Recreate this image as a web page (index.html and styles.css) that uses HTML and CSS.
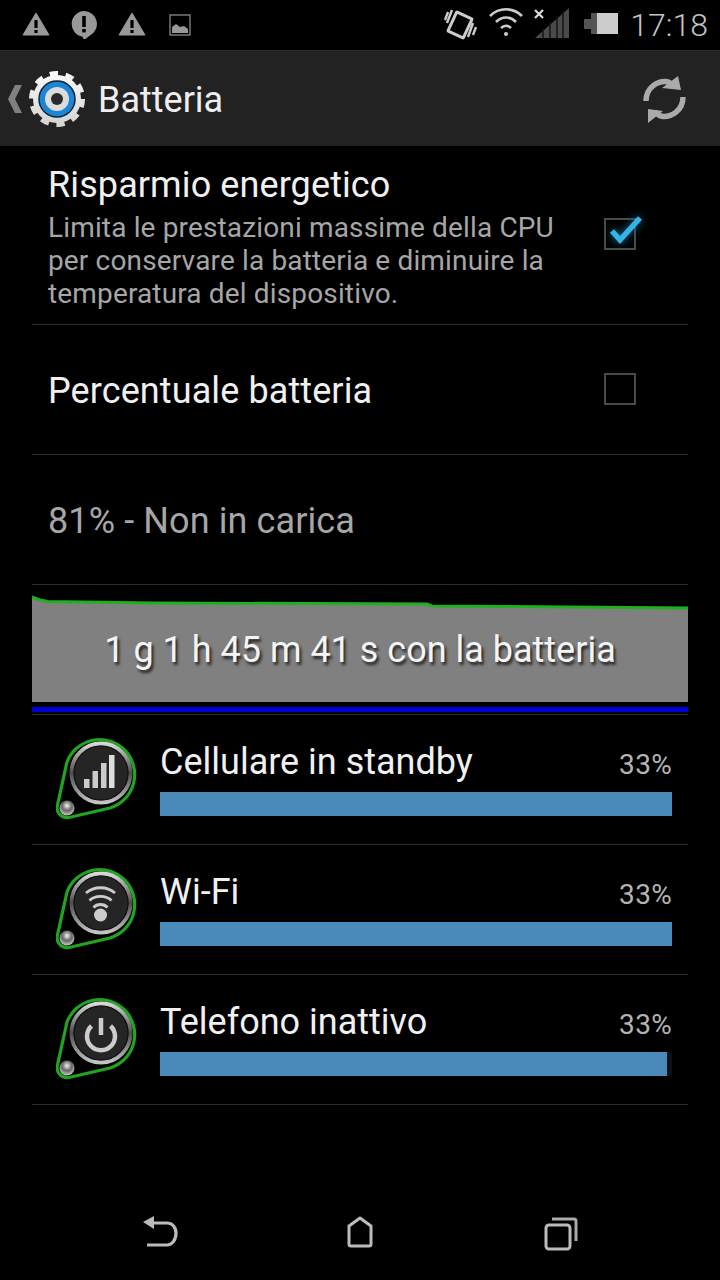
FILE: index.html
```html
<!DOCTYPE html>
<html lang="en">
<head>
    <meta charset="UTF-8">
    <meta name="viewport" content="width=device-width, initial-scale=1.0">
    <title>Batteria</title>
    <link rel="stylesheet" href="styles.css">
</head>
<body>
    <svg class="defs" width="0" height="0">
        <defs>
            <linearGradient id="metal" x1="0" y1="0" x2="0" y2="1">
                <stop offset="0" stop-color="#d8d8d8"/>
                <stop offset="0.5" stop-color="#4c4c4c"/>
                <stop offset="1" stop-color="#c4c4c4"/>
            </linearGradient>
            <radialGradient id="ball" cx="0.5" cy="0.35" r="0.6">
                <stop offset="0" stop-color="#f4f4f4"/>
                <stop offset="0.55" stop-color="#666"/>
                <stop offset="1" stop-color="#bbb"/>
            </radialGradient>
            <linearGradient id="gearfill" x1="0" y1="0" x2="0" y2="1">
                <stop offset="0" stop-color="#fafafa"/>
                <stop offset="1" stop-color="#d4d4d4"/>
            </linearGradient>
            <symbol id="pin" viewBox="0 0 84 88">
                <path d="M11 27 L1.5 70 A 10 10 0 0 0 13 82.5 L54 73 A 35 35 0 1 0 11 27 Z" fill="#000" stroke="#1fa51f" stroke-width="3.2"/>
                <circle cx="45" cy="38" r="29.5" fill="#252525" stroke="url(#metal)" stroke-width="4"/>
                <circle cx="45" cy="38" r="27" fill="none" stroke="#111" stroke-width="1.2"/>
                <circle cx="11" cy="73" r="7.5" fill="url(#ball)"/>
            </symbol>
        </defs>
    </svg>

    <div class="statusbar">
        <svg class="st" width="28" height="28" viewBox="0 0 28 28"><path d="M14 2 L27 24 H1 Z" fill="#999" stroke="#999" stroke-linejoin="round"/><rect x="12.4" y="9" width="3.2" height="8" fill="#000"/><rect x="12.4" y="19" width="3.2" height="3" fill="#000"/></svg>
        <svg class="st" width="28" height="28" viewBox="0 0 28 28"><path d="M14 0 A13 13 0 0 1 20 24.5 L14 29 L12.5 25.8 A13 13 0 0 1 14 0 Z" fill="#999"/><rect x="12.2" y="5" width="3.6" height="11" fill="#000"/><rect x="12.2" y="18" width="3.6" height="3.4" fill="#000"/></svg>
        <svg class="st" width="28" height="28" viewBox="0 0 28 28"><path d="M14 2 L27 24 H1 Z" fill="#999" stroke="#999" stroke-linejoin="round"/><rect x="12.4" y="9" width="3.2" height="8" fill="#000"/><rect x="12.4" y="19" width="3.2" height="3" fill="#000"/></svg>
        <svg class="st" width="28" height="28" viewBox="0 0 28 28"><rect x="4" y="4" width="20" height="20" fill="none" stroke="#777" stroke-width="1.5"/><path d="M6 22 V16 L10 13 L14 16 L18 15 L22 18 V22 Z" fill="#999"/></svg>
        <div class="st-right">
            <svg width="34" height="40" viewBox="0 0 34 40">
                <rect x="8.5" y="9.5" width="17" height="21" rx="1" fill="none" stroke="#ccc" stroke-width="3" transform="rotate(25 17 20)"/>
                <path d="M5 7 L2 15 M9 5 L4 18 M30 18 L25 32 M33 22 L30 30" stroke="#ccc" stroke-width="2.4" fill="none"/>
            </svg>
            <svg width="34" height="40" viewBox="0 0 34 40">
                <path d="M1 11 C10 2 24 2 33 11 M7 17 C13 11 21 11 27 17 M12 23 C15 20 19 20 22 23" fill="none" stroke="#ccc" stroke-width="2.6"/>
                <circle cx="17" cy="29" r="2" fill="#ccc"/>
            </svg>
            <svg class="signal" width="34" height="40" viewBox="0 0 34 40">
                <path d="M0 33 L34 3 V33 Z" fill="#4a4a4a"/>
                <path d="M8 23 V33 M15 17 V33 M22 11 V33 M28 6 V33" stroke="#111" stroke-width="1.4"/>
                <path d="M0 5 L8 13 M8 5 L0 13" stroke="#ddd" stroke-width="2.2"/>
            </svg>
            <svg width="37" height="40" viewBox="0 0 37 40">
                <rect x="3" y="14" width="8" height="10" fill="#555"/>
                <rect x="10" y="8" width="7" height="21" fill="#555"/>
                <rect x="16" y="8" width="21" height="21" fill="#ccc"/>
            </svg>
            <span class="clock">17:18</span>
        </div>
    </div>

    <div class="actionbar">
        <svg class="up" width="16" height="28" viewBox="0 0 16 28"><path d="M14 0 H7 L0 14 L7 28 H14 L7 14 Z" fill="#808080"/></svg>
        <svg class="gear" width="60" height="60" viewBox="0 0 60 60">
            <circle cx="30" cy="30" r="25" fill="none" stroke="url(#gearfill)" stroke-width="6" stroke-dasharray="8.2 7.5"/>
            <circle cx="30" cy="30" r="24" fill="url(#gearfill)"/>
            <circle cx="30" cy="30" r="18" fill="#1c86d6" stroke="#123" stroke-width="1.5"/>
            <circle cx="30" cy="30" r="12" fill="#dcdcdc"/>
            <circle cx="30" cy="30" r="6" fill="#2a2a2a"/>
        </svg>
        <span class="screen-title">Batteria</span>
        <svg class="sync" width="48" height="52" viewBox="0 0 48 52">
            <path d="M6 28 C6 14 18 8 26 8.5 C30 9 32 11 34 13" fill="none" stroke="#aaa" stroke-width="5.5"/>
            <path d="M38 3 L41 17 L22 15 Z" fill="#aaa"/>
            <path d="M43 24 C43 38 31 44 23 43.5 C19 43 17 41 15 39" fill="none" stroke="#aaa" stroke-width="5.5"/>
            <path d="M8 50 L8 36 L23 38 Z" fill="#aaa"/>
        </svg>
    </div>

    <div class="list">
        <div class="pref pref-first">
            <div class="pref-text">
                <div class="pref-title">Risparmio energetico</div>
                <div class="pref-desc">Limita le prestazioni massime della CPU per conservare la batteria e diminuire la temperatura del dispositivo.</div>
            </div>
            <div class="check">
                <svg class="tick" width="38" height="34" viewBox="0 0 38 34"><path d="M6 19 L14 28 L34 6" fill="none" stroke="#33b5e5" stroke-width="5.5"/></svg>
            </div>
        </div>
        <div class="pref">
            <div class="pref-text">
                <div class="pref-title">Percentuale batteria</div>
            </div>
            <div class="check"></div>
        </div>
        <div class="pref pref-status">81% - Non in carica</div>

        <div class="chart">
            <div class="chart-plot">
                <svg width="656" height="117" viewBox="0 0 656 117">
                    <path d="M0 12 L8 15 L16 16.5 L120 18 L395 19 L400 21 L656 23 V117 H0 Z" fill="#808080"/>
                    <path d="M0 12 L8 15 L16 16.5 L120 18 L395 19 L400 21 L656 23" fill="none" stroke="#1fb01f" stroke-width="3"/>
                </svg>
                <div class="chart-label">1 g 1 h 45 m 41 s con la batteria</div>
            </div>
            <div class="chart-blue"></div>
        </div>

        <div class="usage">
            <svg class="pin" width="84" height="88"><use href="#pin"/>
                <rect x="28" y="44" width="5.5" height="9" fill="#ccc"/><rect x="36.5" y="36" width="5.5" height="17" fill="#ccc"/><rect x="45" y="28" width="5.5" height="25" fill="#ccc"/><rect x="53" y="20" width="5.5" height="33" fill="#ddd"/>
            </svg>
            <div class="usage-body">
                <div class="usage-head"><span class="usage-name">Cellulare in standby</span><span class="usage-pct">33%</span></div>
                <div class="bar"><div class="bar-fill" style="width: 100%"></div></div>
            </div>
        </div>
        <div class="usage">
            <svg class="pin" width="84" height="88"><use href="#pin"/>
                <path d="M30 28 C38 21 51 21 59 28 M33.5 35.5 C39 30 50 30 55.5 35.5 M37.5 42.5 C41 38.5 48 38.5 51.5 42.5" fill="none" stroke="#ccc" stroke-width="2.8"/>
                <circle cx="44.5" cy="50" r="6.5" fill="#ccc"/>
            </svg>
            <div class="usage-body">
                <div class="usage-head"><span class="usage-name">Wi-Fi</span><span class="usage-pct">33%</span></div>
                <div class="bar"><div class="bar-fill" style="width: 100%"></div></div>
            </div>
        </div>
        <div class="usage">
            <svg class="pin" width="84" height="88"><use href="#pin"/>
                <path d="M35.5 31 A14 14 0 1 0 54.5 31" fill="none" stroke="#ccc" stroke-width="4.5"/>
                <path d="M45 23 V40" stroke="#ccc" stroke-width="4.5"/>
            </svg>
            <div class="usage-body">
                <div class="usage-head"><span class="usage-name">Telefono inattivo</span><span class="usage-pct">33%</span></div>
                <div class="bar"><div class="bar-fill" style="width: 99%"></div></div>
            </div>
        </div>
    </div>

    <div class="navbar">
        <svg width="40" height="36" viewBox="0 0 40 36"><path d="M10 8 H27 C32 8 36 12 36 18 C36 25 32 30 27 30 H7" fill="none" stroke="#bbb" stroke-width="3.2"/><path d="M3 7 L14 1 V14 Z" fill="#bbb"/></svg>
        <svg width="40" height="36" viewBox="0 0 40 36"><path d="M20 3 L31 11 V29 Q31 31 29 31 H11 Q9 31 9 29 V11 Z" fill="none" stroke="#bbb" stroke-width="3" stroke-linejoin="round"/></svg>
        <svg width="40" height="36" viewBox="0 0 40 36"><rect x="6" y="10" width="24" height="24" rx="3" fill="none" stroke="#bbb" stroke-width="3"/><path d="M12 4 H34 Q36 4 36 6 V26" fill="none" stroke="#aaa" stroke-width="3"/></svg>
    </div>
</body>
</html>
```

FILE: styles.css
```css
body {
    margin: 0;
    width: 720px;
    height: 1280px;
    background-color: #000;
    font-family: Roboto, "Noto Sans", sans-serif;
    color: #f0f0f0;
    display: flex;
    flex-direction: column;
    overflow: hidden;
}
.defs {
    position: absolute;
}
.statusbar {
    height: 50px;
    flex: none;
    display: flex;
    align-items: center;
    gap: 20px;
    padding-left: 22px;
}
.st-right {
    margin-left: auto;
    display: flex;
    align-items: center;
    gap: 12px;
    padding-right: 12px;
}
.signal {
    overflow: visible;
}
.clock {
    font-size: 32px;
    font-weight: 300;
    color: #c4c4c4;
}
.actionbar {
    height: 96px;
    flex: none;
    display: flex;
    align-items: center;
    background-color: #222;
    border-top: 1px solid #2c2c2c;
    box-sizing: border-box;
    padding: 0 32px 0 8px;
}
.up {
    flex: none;
}
.gear {
    flex: none;
    margin-left: 3px;
}
.screen-title {
    font-size: 36px;
    margin-left: 11px;
    padding-top: 2px;
    color: #eee;
}
.sync {
    flex: none;
    margin-left: auto;
}
.list {
    flex: 1;
    margin: 0 32px;
}
.pref {
    height: 127px;
    padding-top: 2px;
    display: flex;
    align-items: center;
    border-bottom: 1px solid #2e2e2e;
}
.pref-first {
    height: 178px;
    padding-top: 0;
}
.pref-text {
    flex: 1;
    padding-left: 16px;
}
.pref-title {
    font-size: 36px;
    line-height: 48px;
    letter-spacing: 0.1px;
}
.pref-first .pref-title {
    margin-bottom: 2px;
}
.pref-desc {
    font-size: 28px;
    line-height: 33px;
    letter-spacing: 0.15px;
    color: #a6a6a6;
    width: 520px;
}
.check {
    width: 28px;
    height: 28px;
    flex: none;
    margin: -4px 52px 0 0;
    border: 2px solid #4a4a4a;
    position: relative;
}
.pref-first .check {
    margin-top: -2px;
}
.tick {
    position: absolute;
    left: 0;
    top: -8px;
    filter: drop-shadow(0 0 4px #0d6f9c);
}
.pref-status {
    padding-left: 16px;
    font-size: 36px;
    letter-spacing: 0.1px;
    color: #a6a6a6;
}
.chart {
    height: 129px;
    border-bottom: 1px solid #2e2e2e;
}
.chart-plot {
    display: grid;
    height: 117px;
}
.chart-plot svg {
    grid-area: 1 / 1;
    display: block;
}
.chart-label {
    grid-area: 1 / 1;
    text-align: center;
    font-size: 36px;
    line-height: 40px;
    margin-top: 45px;
    color: #f4f4f4;
    text-shadow: 2px 3px 3px #222;
    z-index: 1;
}
.chart-blue {
    height: 5px;
    margin-top: 5px;
    background-color: #0000d8;
}
.usage {
    height: 129px;
    display: flex;
    border-bottom: 1px solid #2e2e2e;
}
.pin {
    flex: none;
    width: 84px;
    height: 88px;
    margin: 20px 20px 0 24px;
}
.usage-body {
    flex: 1;
    margin-right: 16px;
    padding-top: 25px;
}
.usage-head {
    display: flex;
    justify-content: space-between;
    align-items: baseline;
    height: 52px;
}
.usage-name {
    font-size: 36px;
    line-height: 44px;
}
.usage-pct {
    font-size: 28px;
    letter-spacing: 0.3px;
    color: #b4b4b4;
}
.bar {
    height: 24px;
    background-color: #111;
}
.bar-fill {
    height: 100%;
    background-color: #4a8ab9;
}
.navbar {
    height: 95px;
    flex: none;
    display: flex;
    justify-content: space-between;
    align-items: center;
    padding: 0 140px;
}
```
